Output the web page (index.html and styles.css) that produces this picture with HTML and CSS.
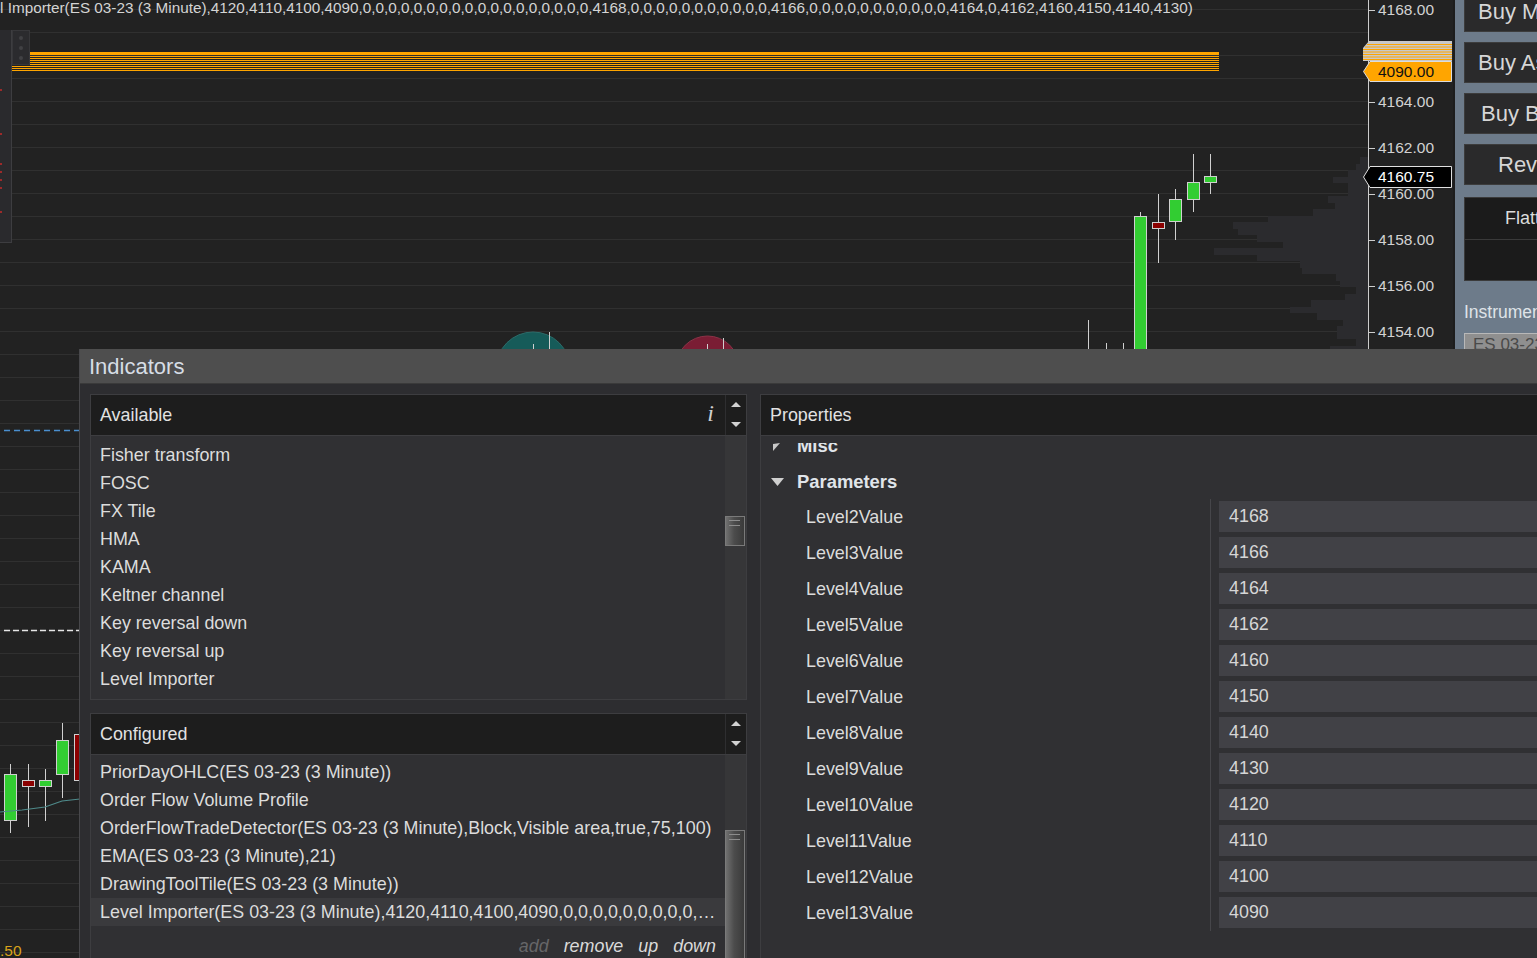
FILE: index.html
```html
<!DOCTYPE html>
<html>
<head>
<meta charset="utf-8">
<title>Indicators</title>
<link rel="stylesheet" href="styles.css">
</head>
<body>
<div class="screen">
  <div class="chart">
    <div class="profile">
      <div class="vbar" style="width:8px"></div>
      <div class="vbar" style="width:12px"></div>
      <div class="vbar" style="width:20px"></div>
      <div class="vbar" style="width:35px"></div>
      <div class="vbar" style="width:20px"></div>
      <div class="vbar" style="width:20px"></div>
      <div class="vbar" style="width:40px"></div>
      <div class="vbar" style="width:33px"></div>
      <div class="vbar" style="width:55px"></div>
      <div class="vbar" style="width:100px"></div>
      <div class="vbar" style="width:135px"></div>
      <div class="vbar" style="width:130px"></div>
      <div class="vbar" style="width:111px"></div>
      <div class="vbar" style="width:85px"></div>
      <div class="vbar" style="width:154px"></div>
      <div class="vbar" style="width:111px"></div>
      <div class="vbar" style="width:68px"></div>
      <div class="vbar" style="width:66px"></div>
      <div class="vbar" style="width:32px"></div>
      <div class="vbar" style="width:28px"></div>
      <div class="vbar" style="width:12px"></div>
      <div class="vbar" style="width:23px"></div>
      <div class="vbar" style="width:57px"></div>
      <div class="vbar" style="width:78px"></div>
      <div class="vbar" style="width:51px"></div>
      <div class="vbar" style="width:25px"></div>
      <div class="vbar" style="width:31px"></div>
      <div class="vbar" style="width:31px"></div>
      <div class="vbar" style="width:12px"></div>
      <div class="vbar" style="width:38px"></div>
    </div>

    <svg class="plot" width="1368" height="958" viewBox="0 0 1368 958">
      <circle cx="533" cy="369" r="37" fill="#165b59" stroke="#2c6b69" stroke-width="1"/>
      <circle cx="707.5" cy="367.5" r="31.5" fill="#7a1d34" stroke="#8a3347" stroke-width="1"/>
      <g stroke="#d0d0d0" stroke-width="1">
        <line x1="533.5" y1="344" x2="533.5" y2="349"/>
        <line x1="549.5" y1="332" x2="549.5" y2="349"/>
        <line x1="707.5" y1="344" x2="707.5" y2="349"/>
        <line x1="723.5" y1="338" x2="723.5" y2="349"/>
        <line x1="1088.5" y1="320" x2="1088.5" y2="349"/>
        <line x1="1106.5" y1="343" x2="1106.5" y2="349"/>
        <line x1="1123.5" y1="343" x2="1123.5" y2="349"/>
        <line x1="1140.5" y1="212" x2="1140.5" y2="217"/>
        <line x1="1158.5" y1="194" x2="1158.5" y2="263"/>
        <line x1="1175.5" y1="189" x2="1175.5" y2="240"/>
        <line x1="1193.5" y1="154" x2="1193.5" y2="212"/>
        <line x1="1210.5" y1="154" x2="1210.5" y2="194"/>
        <line x1="10.5" y1="764" x2="10.5" y2="833"/>
        <line x1="28.5" y1="764" x2="28.5" y2="827"/>
        <line x1="45.5" y1="769" x2="45.5" y2="821"/>
        <line x1="62.5" y1="723" x2="62.5" y2="798"/>
      </g>
      <g stroke="#d0d0d0" stroke-width="1">
        <rect x="1134.5" y="216.5" width="12" height="150" fill="#32cd32"/>
        <rect x="1152.5" y="222.5" width="12" height="6" fill="#8b0000"/>
        <rect x="1169.5" y="199.5" width="12" height="22" fill="#32cd32"/>
        <rect x="1187.5" y="182.5" width="12" height="17" fill="#32cd32"/>
        <rect x="1204.5" y="176.5" width="12" height="6" fill="#32cd32"/>
        <rect x="4.5" y="774.5" width="12" height="46" fill="#32cd32"/>
        <rect x="22.5" y="780.5" width="12" height="6" fill="#8b0000"/>
        <rect x="39.5" y="780.5" width="12" height="6" fill="#32cd32"/>
        <rect x="56.5" y="740.5" width="12" height="34" fill="#32cd32"/>
        <rect x="74.5" y="734.5" width="12" height="46" fill="#8b0000"/>
      </g>
      <polyline points="0,812 22,810 45,807 62,801 80,799" fill="none" stroke="#4f8b8b" stroke-width="1.2"/>
      <line x1="4" y1="430.5" x2="80" y2="430.5" stroke="#4a8fcf" stroke-width="1.3" stroke-dasharray="6 4"/>
      <line x1="4" y1="630.5" x2="80" y2="630.5" stroke="#e6e6e6" stroke-width="1.3" stroke-dasharray="6 3"/>
    </svg>

    <div class="levels">
      <div class="lvl-thick"></div>
      <div class="lvl-thin"></div>
    </div>

    <div class="tools">
      <svg width="11" height="212" viewBox="0 0 11 212">
        <g fill="#9c2a2a">
          <rect x="0" y="59" width="2" height="2"/>
          <rect x="0" y="103" width="2" height="2"/>
          <rect x="0" y="133" width="2" height="2"/>
          <rect x="0" y="141" width="2" height="2"/>
          <rect x="0" y="149" width="2" height="2"/>
          <rect x="0" y="157" width="2" height="2"/>
          <rect x="0" y="181" width="2" height="2"/>
        </g>
      </svg>
    </div>
    <div class="dots"><span></span><span></span><span></span></div>

    <div class="chart-title">l Importer(ES 03-23 (3 Minute),4120,4110,4100,4090,0,0,0,0,0,0,0,0,0,0,0,0,0,0,0,0,0,0,4168,0,0,0,0,0,0,0,0,0,0,0,4166,0,0,0,0,0,0,0,0,0,0,0,4164,0,4162,4160,4150,4140,4130)</div>
    <div class="corner-label">.50</div>
  </div>

  <div class="axis">
    <div class="pl" style="top:1px">4168.00</div>
    <div class="pl" style="top:47px">4166.00</div>
    <div class="pl" style="top:93px">4164.00</div>
    <div class="pl" style="top:139px">4162.00</div>
    <div class="pl" style="top:185px">4160.00</div>
    <div class="pl" style="top:231px">4158.00</div>
    <div class="pl" style="top:277px">4156.00</div>
    <div class="pl" style="top:323px">4154.00</div>

    <div class="tag tag-stack">
      <svg class="tag-shape" width="89" height="41" viewBox="0 0 89 41">
        <polygon points="6,0 89,0 89,20 0,20 0,7" fill="#c9c9c9"/>
        <g stroke="#ffa500" stroke-width="1">
          <line x1="4" y1="3.5" x2="89" y2="3.5"/>
          <line x1="2" y1="6" x2="89" y2="6"/>
          <line x1="0" y1="8.5" x2="89" y2="8.5"/>
          <line x1="0" y1="11" x2="89" y2="11"/>
          <line x1="0" y1="13.5" x2="89" y2="13.5"/>
          <line x1="0" y1="16" x2="89" y2="16"/>
          <line x1="0" y1="18.5" x2="89" y2="18.5"/>
        </g>
        <polygon points="7,20.5 88.5,20.5 88.5,40.5 7,40.5 0.5,30.5" fill="#ffa500" stroke="#dcdcdc" stroke-width="1"/>
      </svg>
      <span class="tag-text tag-text-orange">4090.00</span>
    </div>

    <div class="tag tag-now">
      <svg class="tag-shape" width="89" height="22" viewBox="0 0 89 22">
        <polygon points="7,0.5 88.5,0.5 88.5,21.5 7,21.5 0.5,11" fill="#000" stroke="#e0e0e0" stroke-width="1"/>
      </svg>
      <span class="tag-text tag-text-white">4160.75</span>
    </div>
  </div>

  <div class="side">
    <div class="btn btn-first btn-buym">Buy Market</div>
    <div class="btn btn-buya">Buy Ask</div>
    <div class="btn btn-buyb">Buy Bid</div>
    <div class="btn btn-rev">Reverse</div>
    <div class="flat-block">
      <div class="flat-top">Flatten</div>
      <div class="flat-bottom"></div>
    </div>
    <div class="instr-label">Instrument</div>
    <div class="instr-input">ES 03-23</div>
  </div>

  <div class="dialog">
    <div class="dlg-title">Indicators</div>
    <div class="dlg-body">
      <div class="left-col">
        <div class="panel panel-avail">
          <div class="panel-head">
            <div class="head-title">Available</div>
            <div class="info">i</div>
            <div class="scroll-head"><span class="arr-up"></span><span class="arr-down"></span></div>
          </div>
          <div class="panel-body">
            <div class="list list-avail">
              <div class="item">Fisher transform</div>
              <div class="item">FOSC</div>
              <div class="item">FX Tile</div>
              <div class="item">HMA</div>
              <div class="item">KAMA</div>
              <div class="item">Keltner channel</div>
              <div class="item">Key reversal down</div>
              <div class="item">Key reversal up</div>
              <div class="item">Level Importer</div>
            </div>
            <div class="track"><div class="thumb thumb-avail"></div></div>
          </div>
        </div>

        <div class="panel panel-conf">
          <div class="panel-head">
            <div class="head-title">Configured</div>
            <div class="scroll-head"><span class="arr-up"></span><span class="arr-down"></span></div>
          </div>
          <div class="panel-body">
            <div class="list list-conf">
              <div class="item">PriorDayOHLC(ES 03-23 (3 Minute))</div>
              <div class="item">Order Flow Volume Profile</div>
              <div class="item">OrderFlowTradeDetector(ES 03-23 (3 Minute),Block,Visible area,true,75,100)</div>
              <div class="item">EMA(ES 03-23 (3 Minute),21)</div>
              <div class="item">DrawingToolTile(ES 03-23 (3 Minute))</div>
              <div class="item item-selected">Level Importer(ES 03-23 (3 Minute),4120,4110,4100,4090,0,0,0,0,0,0,0,0,0,0,0,0,0,0,0,0,0,0,4168,0,0,0,0,0,0,0,0,0,0,0,4166,0,0,0,0,0,0,0,0,0,0,0,4164,0,4162,4160,4150,4140,4130)</div>
              <div class="footer">
                <span class="act act-disabled">add</span>
                <span class="act">remove</span>
                <span class="act">up</span>
                <span class="act">down</span>
              </div>
            </div>
            <div class="track"><div class="thumb thumb-conf"></div></div>
          </div>
        </div>
      </div>

      <div class="panel panel-props">
        <div class="panel-head">
          <div class="head-title">Properties</div>
        </div>
        <div class="prop-body">
          <div class="prop-clip">
            <div class="prop-rows">
              <div class="cat cat-misc">
                <svg class="cat-icon" width="14" height="10" viewBox="0 0 14 10"><polygon points="2,3 9,2 2,10" fill="#c8c8c8"/></svg>
                <span>Misc</span>
              </div>
              <div class="cat cat-params">
                <svg class="cat-icon" width="14" height="10" viewBox="0 0 14 10"><polygon points="0,1 13,1 6.5,9" fill="#cfcfcf"/></svg>
                <span>Parameters</span>
              </div>
              <div class="param"><div class="p-label">Level2Value</div><div class="p-cell"><div class="p-box">4168</div></div></div>
              <div class="param"><div class="p-label">Level3Value</div><div class="p-cell"><div class="p-box">4166</div></div></div>
              <div class="param"><div class="p-label">Level4Value</div><div class="p-cell"><div class="p-box">4164</div></div></div>
              <div class="param"><div class="p-label">Level5Value</div><div class="p-cell"><div class="p-box">4162</div></div></div>
              <div class="param"><div class="p-label">Level6Value</div><div class="p-cell"><div class="p-box">4160</div></div></div>
              <div class="param"><div class="p-label">Level7Value</div><div class="p-cell"><div class="p-box">4150</div></div></div>
              <div class="param"><div class="p-label">Level8Value</div><div class="p-cell"><div class="p-box">4140</div></div></div>
              <div class="param"><div class="p-label">Level9Value</div><div class="p-cell"><div class="p-box">4130</div></div></div>
              <div class="param"><div class="p-label">Level10Value</div><div class="p-cell"><div class="p-box">4120</div></div></div>
              <div class="param"><div class="p-label">Level11Value</div><div class="p-cell"><div class="p-box">4110</div></div></div>
              <div class="param"><div class="p-label">Level12Value</div><div class="p-cell"><div class="p-box">4100</div></div></div>
              <div class="param"><div class="p-label">Level13Value</div><div class="p-cell"><div class="p-box">4090</div></div></div>
            </div>
          </div>
        </div>
      </div>
    </div>
  </div>
</div>
</body>
</html>
```

FILE: styles.css
```css
* { box-sizing: border-box; }
html, body { margin: 0; padding: 0; }
body {
  width: 1537px;
  height: 958px;
  overflow: hidden;
  background: #222222;
  font-family: "Liberation Sans", Arial, sans-serif;
}

.screen {
  position: relative;
  display: grid;
  grid-template-columns: 1368px 85px 84px;
  width: 1537px;
  height: 958px;
  overflow: hidden;
}

/* ---------- chart ---------- */
.chart {
  position: relative;
  overflow: hidden;
  background-color: #222222;
  background-image: repeating-linear-gradient(to bottom,
    transparent 0, transparent 9px,
    #303030 9px, #303030 10px,
    transparent 10px, transparent 23px);
}
.profile {
  position: absolute;
  right: 0;
  top: 157px;
  display: flex;
  flex-direction: column;
  align-items: flex-end;
}
.vbar { height: 6.5px; background: #2b2b2e; }
.plot { position: absolute; left: 0; top: 0; }

.levels {
  position: absolute;
  left: 12px;
  top: 52px;
  width: 1207px;
}
.lvl-thick { height: 3px; background: #ffa500; margin-bottom: 1px; }
.lvl-thin {
  height: 15px;
  background: repeating-linear-gradient(to bottom, #ffa500 0, #ffa500 1px, #232323 1px, #232323 2px);
}

.tools {
  position: absolute;
  left: 0;
  top: 30px;
  width: 12px;
  height: 213px;
  background: #2a2a2d;
  border-right: 1px solid #3d3d40;
  border-bottom: 1px solid #3d3d40;
}
.tools svg { display: block; }
.dots {
  position: absolute;
  left: 12px;
  top: 30px;
  width: 18px;
  height: 35px;
  background: #2b2b2e;
  border: 1px solid #37373a;
  display: flex;
  flex-direction: column;
  align-items: center;
  justify-content: space-between;
  padding: 5px 0 4px;
}
.dots span { width: 4px; height: 4px; border-radius: 50%; background: #414144; }

.chart-title {
  position: absolute;
  left: 0;
  top: 0;
  font-size: 15.3px;
  line-height: 15px;
  color: #d4d4d4;
  white-space: nowrap;
}
.corner-label {
  position: absolute;
  left: 0;
  top: 942px;
  font-size: 15.5px;
  line-height: 18px;
  color: #d9a21b;
}

/* ---------- axis ---------- */
.axis {
  position: relative;
  background: #222222;
  border-left: 1px solid #cdcdcd;
}
.pl {
  position: absolute;
  left: 0;
  height: 18px;
  display: flex;
  align-items: center;
  gap: 3px;
  font-size: 15.5px;
  color: #d2d2d2;
  white-space: nowrap;
}
.pl::before { content: ""; width: 6px; height: 1px; background: #cdcdcd; }

.tag { position: absolute; left: -6px; width: 89px; }
.tag-shape { position: absolute; left: 0; top: 0; }
.tag-stack { top: 41px; height: 41px; }
.tag-now { top: 166px; height: 22px; }
.tag-text {
  position: relative;
  display: block;
  padding-left: 15px;
  font-size: 15.5px;
  white-space: nowrap;
}
.tag-text-orange { margin-top: 21px; line-height: 20px; color: #111; }
.tag-text-white { line-height: 22px; color: #fff; }

/* ---------- side panel ---------- */
.side {
  background: #6d7b8a;
  border-left: 2px solid #1d1d1d;
  padding-left: 9px;
  display: flex;
  flex-direction: column;
  overflow: hidden;
}
.btn {
  flex: none;
  width: 150px;
  height: 41px;
  margin-top: 10px;
  background: #2a2a2b;
  border: 1px solid #3c3c3c;
  color: #d6d6d6;
  font-size: 22px;
  line-height: 39px;
  white-space: nowrap;
  overflow: hidden;
}
.btn-first { margin-top: -9px; }
.btn-buym { padding-left: 13px; }
.btn-buya { padding-left: 13px; }
.btn-buyb { padding-left: 16px; }
.btn-rev { padding-left: 33px; }
.flat-block {
  flex: none;
  width: 150px;
  height: 84px;
  margin-top: 12px;
  background: #1b1b1b;
  border: 1px solid #3a3a3a;
  display: flex;
  flex-direction: column;
}
.flat-top {
  height: 42px;
  border-bottom: 1px solid #3a3a3a;
  padding-left: 40px;
  line-height: 41px;
  color: #dcdcdc;
  font-size: 18px;
  white-space: nowrap;
}
.flat-bottom { flex: 1; }
.instr-label {
  flex: none;
  margin-top: 19px;
  height: 24px;
  line-height: 24px;
  font-size: 17.5px;
  color: #dfe3e8;
  white-space: nowrap;
}
.instr-input {
  flex: none;
  margin-top: 9px;
  width: 150px;
  height: 24px;
  background: #8f8f8f;
  border: 1px solid #b8b8b8;
  padding-left: 8px;
  line-height: 22px;
  font-size: 17px;
  color: #4a4a4a;
  white-space: nowrap;
}

/* ---------- dialog ---------- */
.dialog {
  position: absolute;
  left: 79px;
  top: 349px;
  right: 0;
  bottom: 0;
  display: flex;
  flex-direction: column;
  background: #2d2d30;
  border-left: 1px solid #48484b;
  overflow: hidden;
}
.dlg-title {
  flex: none;
  height: 35px;
  background: #4e4e4e;
  border-bottom: 1px solid #3a3a3a;
  padding-left: 9px;
  color: #d6dde5;
  font-size: 22px;
  line-height: 35px;
}
.dlg-body {
  flex: 1;
  min-height: 0;
  display: grid;
  grid-template-columns: 657px 1fr;
  column-gap: 13px;
  padding: 10px 0 0 10px;
}
.left-col {
  display: flex;
  flex-direction: column;
  gap: 13px;
  min-height: 0;
}
.panel {
  display: flex;
  flex-direction: column;
  border: 1px solid #3d3d40;
  background: #303033;
  overflow: hidden;
  min-height: 0;
}
.panel-avail { flex: none; height: 306px; }
.panel-conf { flex: 1; border-bottom: none; }
.panel-props { border-right: none; border-bottom: none; }

.panel-head {
  flex: none;
  height: 41px;
  display: flex;
  background: #1d1d1d;
  border-bottom: 1px solid #3d3d40;
}
.head-title {
  flex: 1;
  padding-left: 9px;
  line-height: 40px;
  font-size: 17.9px;
  color: #e2e2e2;
}
.info {
  padding-right: 11px;
  font-family: "Liberation Serif", "Times New Roman", serif;
  font-style: italic;
  font-size: 24px;
  line-height: 36px;
  color: #d0d0d0;
}
.scroll-head {
  width: 21px;
  border-left: 1px solid #2e2e30;
  display: flex;
  flex-direction: column;
  align-items: center;
  justify-content: space-between;
  padding: 7px 0 8px;
}
.arr-up, .arr-down {
  width: 0;
  height: 0;
  border-left: 5px solid transparent;
  border-right: 5px solid transparent;
}
.arr-up { border-bottom: 5px solid #d2d2d2; }
.arr-down { border-top: 5px solid #d2d2d2; }

.panel-body {
  flex: 1;
  min-height: 0;
  display: flex;
}
.list { flex: 1; min-width: 0; }
.list-avail { padding-top: 5px; }
.list-conf { padding-top: 3px; }
.item {
  height: 28px;
  line-height: 28px;
  padding: 0 8px 0 9px;
  font-size: 17.9px;
  color: #dcdcdc;
  white-space: nowrap;
  overflow: hidden;
  text-overflow: ellipsis;
}
.item-selected { background: #3a3a3d; }
.footer {
  margin-top: 6px;
  height: 28px;
  line-height: 28px;
  display: flex;
  justify-content: flex-end;
  gap: 15px;
  padding-right: 9px;
  font-size: 17.9px;
  font-style: italic;
  color: #dadada;
}
.act-disabled { color: #666668; }

.track {
  width: 21px;
  flex: none;
  background: #363638;
  display: flex;
  flex-direction: column;
}
.thumb {
  flex: none;
  width: 20px;
  border: 1px solid #7a7a7a;
  background:
    linear-gradient(#8c8c8c, #8c8c8c) 3px 3px / 11px 1px no-repeat,
    linear-gradient(#8c8c8c, #8c8c8c) 3px 8px / 11px 1px no-repeat,
    linear-gradient(to right, #707070, #4c4c4c 45%, #3a3a3a);
}
.thumb-avail { margin-top: 80px; height: 30px; }
.thumb-conf { margin-top: 75px; height: 220px; }

/* ---------- properties ---------- */
.prop-body {
  flex: 1;
  min-height: 0;
  padding-top: 7px;
  display: flex;
  flex-direction: column;
}
.prop-clip { flex: 1; min-height: 0; overflow: hidden; }
.prop-rows { margin-top: -15px; }
.cat {
  display: flex;
  align-items: center;
  gap: 12px;
  padding-left: 10px;
  font-weight: bold;
  font-size: 18.4px;
  color: #e0e5ea;
}
.cat-misc { height: 36px; }
.cat-params { height: 35px; }
.cat-icon { display: block; flex: none; }
.param {
  display: grid;
  grid-template-columns: 449px 1fr;
  height: 36px;
}
.p-label {
  padding-left: 45px;
  line-height: 36px;
  font-size: 17.9px;
  color: #dcdcdc;
  white-space: nowrap;
}
.p-cell {
  border-left: 1px solid #46464a;
  padding: 2px 0 3px 8px;
}
.p-box {
  height: 31px;
  background: #414146;
  padding-left: 10px;
  line-height: 31px;
  font-size: 17.9px;
  color: #d6d6d6;
}
```
